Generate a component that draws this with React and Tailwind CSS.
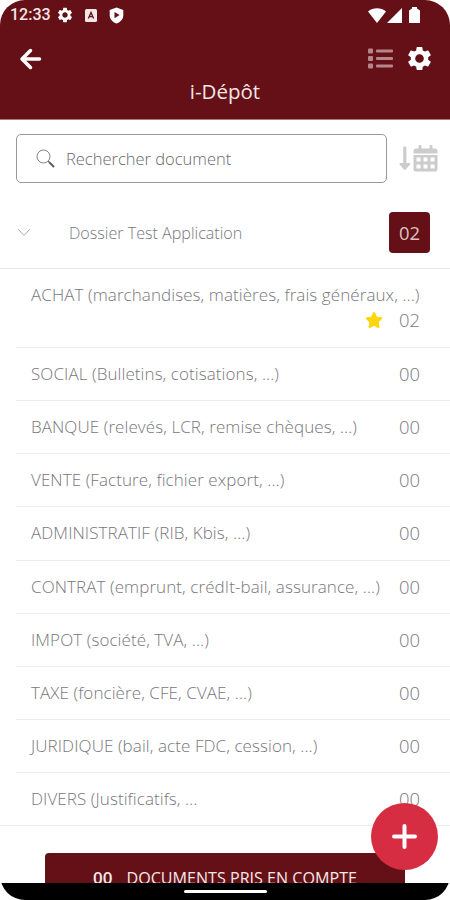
import { FaStar } from 'react-icons/fa6';
import { MdSettings } from 'react-icons/md';

const categories = [
  { label: 'SOCIAL (Bulletins, cotisations, ...)', count: '00' },
  { label: 'BANQUE (relevés, LCR, remise chèques, ...)', count: '00' },
  { label: 'VENTE (Facture, fichier export, ...)', count: '00' },
  { label: 'ADMINISTRATIF (RIB, Kbis, ...)', count: '00' },
  { label: 'CONTRAT (emprunt, crédIt-bail, assurance, ...)', count: '00' },
  { label: 'IMPOT (société, TVA, ...)', count: '00' },
  { label: 'TAXE (foncière, CFE, CVAE, ...)', count: '00' },
  { label: 'JURIDIQUE (bail, acte FDC, cession, ...)', count: '00' },
];

const StatusBar = () => (
  <div className="flex h-[30px] items-center justify-between pl-[10px] pr-[30px] text-white">
    <div className="flex items-center">
      <span className="w-[46px] font-[Roboto] text-[16px] font-medium leading-none text-[#f3e6e6]">12:33</span>
      <MdSettings className="h-[18px] w-[18px]" />
      <svg className="ml-[11px]" width="12" height="13" viewBox="0 0 12 13">
        <rect width="12" height="13" rx="1.5" fill="#f3e6e6" />
        <path d="M3.4 9.6 6 3.4l2.6 6.2M4.4 7.6h3.2" fill="none" stroke="#650f16" strokeWidth="1.3" />
      </svg>
      <svg className="ml-[12px]" width="15" height="17" viewBox="0 0 15 17">
        <path d="M7.5.4 14.3 3v5.2c0 3.7-2.8 7-6.8 8.4C3.5 15.2.7 11.9.7 8.2V3z" fill="#fff" />
        <path d="M5.5 5v6.2L10.600 8z" fill="#650f16" />
      </svg>
    </div>
    <div className="flex items-center">
      <svg width="18" height="15" viewBox="0 0 18 15">
        <path d="M0 3.5C5-.7 13-.7 18 3.5L9 15z" fill="#fff" />
      </svg>
      <svg className="ml-[1px]" width="15" height="15" viewBox="0 0 15 15">
        <path d="M15 0v15H0z" fill="#fff" />
      </svg>
      <svg className="ml-[7px]" width="11" height="16" viewBox="0 0 11 16">
        <path d="M3 0h5v1.6l3 2V16H0V3.600l3-2z" fill="#fff" />
      </svg>
    </div>
  </div>
);

const ListIcon = () => (
  <svg width="25" height="22" viewBox="0 0 25 22" fill="#b6858a">
    <rect y="0.5" width="5" height="5" rx="1" />
    <rect y="8" width="5" height="5" rx="1" />
    <rect y="15.5" width="5" height="5" rx="1" />
    <rect x="8" y="1.5" width="17" height="3" rx="1" />
    <rect x="8" y="9" width="17" height="3" rx="1" />
    <rect x="8" y="16.5" width="17" height="3" rx="1" />
  </svg>
);

const Header = () => (
  <header className="h-[120px] border-b border-[#a77c80] bg-[#650f16]">
    <StatusBar />
    <div className="flex h-[57px] items-center justify-between pl-[19px] pr-[16px] text-white">
      <svg width="23" height="22" viewBox="0 0 23 22" fill="none" stroke="#fff" strokeWidth="3.5" strokeLinecap="round" strokeLinejoin="round">
        <path d="M11.5 2.500 3 11l8.500 8.500M3.500 11H20.500" />
      </svg>
      <div className="flex items-center gap-[12px]">
        <ListIcon />
        <MdSettings className="h-[29px] w-[29px]" />
      </div>
    </div>
    <h1 className="-mt-[10px] text-center text-[20.5px] font-normal leading-[28px] text-[#f3e6e6]">i-Dépôt</h1>
  </header>
);

const SortByDate = () => (
  <div className="ml-[12px] flex items-center gap-[2px]">
    <svg width="12" height="25" viewBox="0 0 12 25" fill="#ccc">
      <path d="M4.200 1.500Q4.200.500 5 .500h1.600q.8 0 .8 1V17h3.100q1.500.200.600 1.500l-4.400 5q-.9.900-1.800 0L.700 18.500Q-.2 17.200 1.300 17h2.900z" />
    </svg>
    <svg width="25" height="27" viewBox="0 0 25 27" fill="#ccc">
      <path d="M5.500 1Q5.500 0 6.500 0h1Q8.500 0 8.500 1v2.500h8V1q0-1 1-1h1q1 0 1 1v2.500h2.500Q24.500 3.500 24.500 6v2.500H.5V6q0-2.500 2.500-2.500h2.500z" />
      <path fillRule="evenodd" d="M.5 10h24v14q0 2.500-2.500 2.500H3Q.5 26.500.5 24zM3.500 12.500v4h4v-4zM10.500 12.500v4h4v-4zM17.500 12.500v4h4v-4zM3.500 19.500v4h4v-4zM10.500 19.500v4h4v-4zM17.500 19.500v4h4v-4z" />
    </svg>
  </div>
);

const SearchRow = () => (
  <div className="flex items-center pt-[14px] pl-[16px]">
    <div className="flex h-[49px] w-[371px] items-center rounded-[5px] border border-[#999] pl-[19px]">
      <svg width="20" height="20" viewBox="0 0 20 20" fill="none">
        <circle cx="7.5" cy="7.5" r="6.5" stroke="#85858a" strokeWidth="1" />
        <path d="m12 12 1.500 1.500" stroke="#66666d" strokeWidth="1" />
        <path d="m13 13 5 5" stroke="#55555d" strokeWidth="1.8" />
      </svg>
      <span className="ml-[10px] text-[16.5px] leading-[24px] text-[#67676c]">Rechercher document</span>
    </div>
    <SortByDate />
  </div>
);

const Label = ({ children }) => (
  <span className="block whitespace-nowrap text-[17px] leading-[26px] tracking-[0.08px]">{children}</span>
);

const Count = ({ children }) => (
  <span className="text-[18.4px] leading-[26px]">{children}</span>
);

const App = () => {
  return (
    <div className="h-[900px] w-[450px] overflow-hidden bg-white">
      <div className="relative h-[900px] overflow-hidden rounded-[25px] bg-white font-['Open_Sans',sans-serif] font-light text-[#77777c]">
        <Header />
        <SearchRow />
        <div className="mt-[14px] flex h-[72px] items-center border-b border-[#e9e9ea] pl-[17px] pr-[20px]">
          <svg width="14" height="9" viewBox="0 0 14 9" fill="none">
            <path d="m1 1 6 6.500L13 1" stroke="#aaa" strokeWidth="1" />
          </svg>
          <span className="ml-[38px] text-[16.1px] leading-[26px]">Dossier Test Application</span>
          <span className="ml-auto flex h-[41px] w-[41px] items-center justify-center rounded-[4px] bg-[#650f16] text-[18.4px] font-normal text-[#dcc3c4]">02</span>
        </div>
        <ul className="ml-[16px]">
          <li className="h-[79px] border-b border-[#ededee] pl-[15px] pr-[30px] pt-[13px]">
            <Label>ACHAT (marchandises, matières, frais généraux, ...)</Label>
            <div className="-mt-[1px] flex h-[26px] items-center justify-end gap-[16px]">
              <FaStar className="text-[18px] text-[#ffd60a]" />
              <Count>02</Count>
            </div>
          </li>
          {categories.map((item) => (
            <li key={item.label} className="flex h-[53.13px] items-center justify-between border-b border-[#ededee] pl-[15px] pr-[30px]">
              <Label>{item.label}</Label>
              <Count>{item.count}</Count>
            </li>
          ))}
        </ul>
        <div className="flex h-[53px] items-center justify-between border-b border-[#ededee] pl-[31px] pr-[30px]">
          <Label>DIVERS (Justificatifs, ...</Label>
          <Count>00</Count>
        </div>
        <div className="mx-[45px] mt-[27px] flex h-[50px] items-center justify-center gap-[14px] rounded-[4px] bg-[#650f16] text-[16.1px] font-normal text-[#f5e9e9]">
          <span className="text-[17px] font-semibold">00</span>
          <span>DOCUMENTS PRIS EN COMPTE</span>
        </div>
        <button className="absolute top-[803px] left-[371px] flex h-[67px] w-[67px] items-center justify-center rounded-full bg-[#d62d43] text-white">
          <svg width="25" height="25" viewBox="0 0 25 25" stroke="#fff" strokeWidth="4" strokeLinecap="round">
            <path d="M12.500 2v21M2 12.500h21" />
          </svg>
        </button>
        <div className="absolute bottom-0 left-0 flex h-[17px] w-full justify-center bg-black pt-[7px]">
          <div className="h-[3px] w-[83px] rounded-full bg-white" />
        </div>
      </div>
    </div>
  );
};

export default App;
